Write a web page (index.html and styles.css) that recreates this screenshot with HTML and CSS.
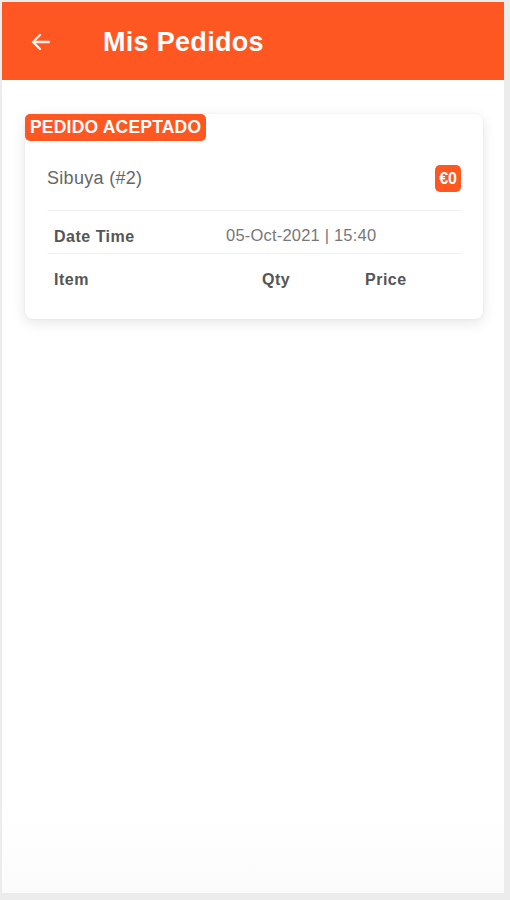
FILE: index.html
```html
<!DOCTYPE html>
<html>
<head>
<meta charset="utf-8">
<link rel="stylesheet" href="styles.css">
</head>
<body>
<div class="frame">
  <header class="topbar">
    <svg class="back" width="24" height="24" viewBox="0 0 24 24"><path d="M20 12H5M11 5l-7 7 7 7" fill="none" stroke="#fff" stroke-width="2.4" stroke-linecap="round" stroke-linejoin="round" opacity="0.9"/></svg>
    <h1 class="title">Mis Pedidos</h1>
  </header>
  <main class="content">
    <div class="card">
      <span class="status">PEDIDO ACEPTADO</span>
      <div class="row-head">
        <span class="shop">Sibuya (#2)</span>
        <span class="price-tag">€0</span>
      </div>
      <div class="sep"></div>
      <div class="row-date">
        <span class="lbl">Date Time</span>
        <span class="val">05-Oct-2021 | 15:40</span>
      </div>
      <div class="sep sep-tight"></div>
      <div class="row-items">
        <span class="lbl c1">Item</span>
        <span class="lbl c2">Qty</span>
        <span class="lbl c3">Price</span>
      </div>
    </div>
  </main>
</div>
</body>
</html>
```
FILE: styles.css
```css
* { box-sizing: border-box; }
html, body { margin: 0; padding: 0; }
body {
  width: 510px; height: 900px;
  background: #ececec;
  font-family: "Liberation Sans", Arial, sans-serif;
  padding: 2px 6px 7px 2px;
}
.frame {
  height: 891px;
  background: #fff;
  display: flex; flex-direction: column;
}
.topbar {
  height: 78px;
  background: #fe5722;
  display: flex; align-items: center;
  padding-left: 27px;
}
.back { margin-top: 2px; }
.title {
  margin: 0 0 0 50px;
  color: #fff;
  font-size: 27px;
  font-weight: bold;
  letter-spacing: 0.3px;
  margin-top: 2px;
}
.content {
  flex: 1;
  padding: 34px 0 0 23px;
  background: linear-gradient(#fff 90%, #fbfbfb);
}
.card {
  position: relative;
  width: 458px;
  height: 205px;
  background: #fff;
  border-radius: 8px;
  box-shadow: 0 4px 14px rgba(0,0,0,0.10), 0 0 3px rgba(0,0,0,0.05);
  padding: 44px 22px 0 22px;
}
.status {
  position: absolute; left: 0; top: 0;
  background: #fe5722;
  color: #fff;
  font-weight: bold;
  font-size: 17.5px;
  line-height: 27px;
  padding: 0 5px 0 5px;
  border-radius: 5px;
  letter-spacing: 0.2px;
}
.row-head {
  display: flex; justify-content: space-between; align-items: center;
  height: 40px;
}
.shop { color: #666; font-size: 18px; letter-spacing: 0.3px; }
.price-tag {
  background: #fe5722; color: #fff; font-weight: bold; font-size: 16px;
  line-height: 27px; padding: 0 4px; border-radius: 5px;
}
.sep { height: 1px; background: #f1f1f1; margin-top: 12px; }
.sep-tight { margin-top: 0; }
.row-date {
  display: flex; align-items: center; height: 42px;
  padding-left: 7px;
}
.lbl { color: #555; font-weight: bold; font-size: 16px; letter-spacing: 0.5px; }
.row-date .lbl { width: 172px; margin-top: 10px; }
.val { color: #777; font-size: 16.5px; letter-spacing: 0.2px; margin-top: 6px; }
.row-items {
  display: flex; align-items: center; height: 52px;
  padding-left: 7px;
}
.c1 { width: 208px; }
.c2 { width: 103px; }
```
